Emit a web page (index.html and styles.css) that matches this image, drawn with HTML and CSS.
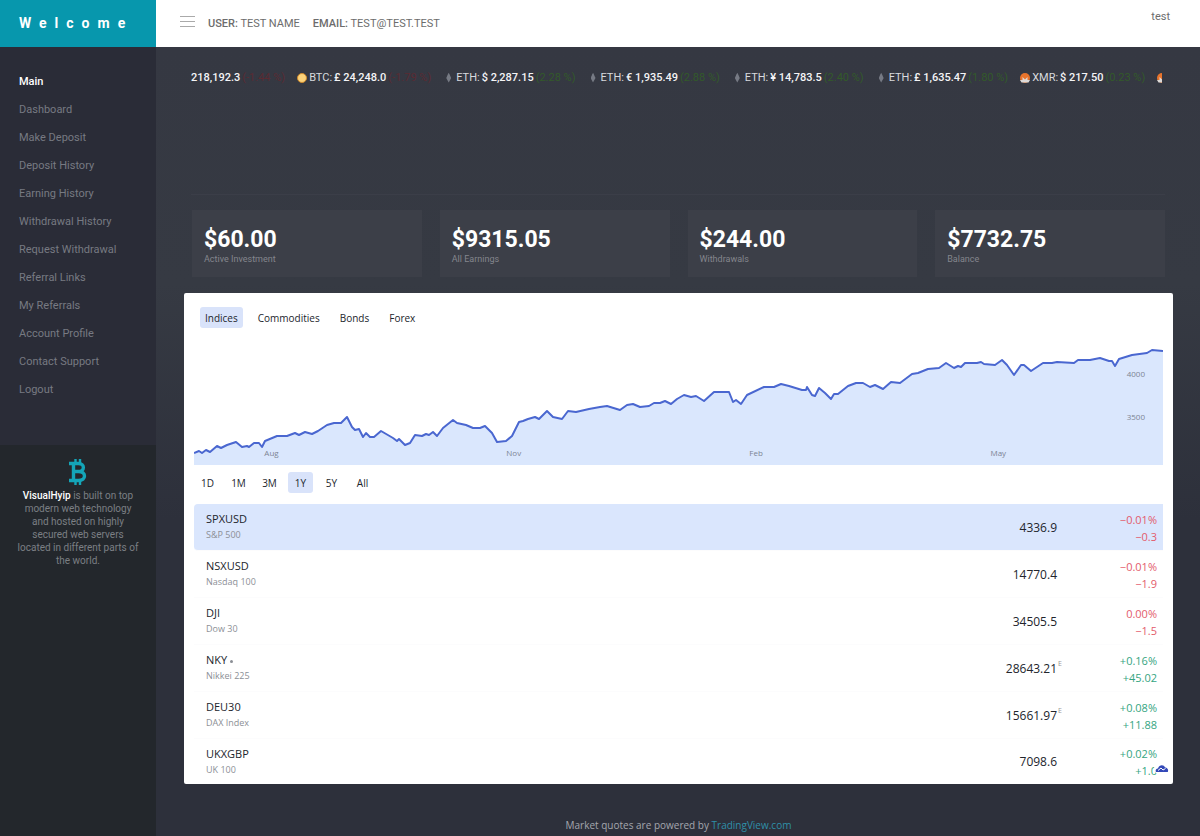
FILE: index.html
```html
<!DOCTYPE html>
<html lang="en">
<head>
<meta charset="utf-8">
<meta name="viewport" content="width=device-width, initial-scale=1">
<title>Dashboard</title>
<link rel="stylesheet" href="styles.css">
</head>
<body>
<div class="app">
  <aside class="sidebar">
    <div class="brand">Welcome</div>
    <nav class="nav" aria-label="Main">
      <h2 class="nav-title">Main</h2>
      <a href="#">Dashboard</a>
      <a href="#">Make Deposit</a>
      <a href="#">Deposit History</a>
      <a href="#">Earning History</a>
      <a href="#">Withdrawal History</a>
      <a href="#">Request Withdrawal</a>
      <a href="#">Referral Links</a>
      <a href="#">My Referrals</a>
      <a href="#">Account Profile</a>
      <a href="#">Contact Support</a>
      <a href="#">Logout</a>
    </nav>
    <div class="about">
      <svg class="about-icon" viewBox="0 0 20 26" aria-hidden="true">
        <g fill="none" stroke="currentColor" stroke-width="3.400">
          <path d="M1 4.500H10.500C17 4.500 17 12.500 10.500 12.500H5.500M10.500 12.500C18.500 12.500 18.500 21.500 10.500 21.500H1M5.500 4.500V21.500"/>
          <path d="M7.500 0V4M12 0V4M7.500 22V26M12 22V26" stroke-width="2.400"/>
        </g>
      </svg>
      <p><strong>VisualHyip</strong> is built on top modern web technology and hosted on highly secured web servers located in different parts of the world.</p>
    </div>
  </aside>

  <div class="page">
    <header class="topbar">
      <button class="menu" type="button" aria-label="Toggle menu"><span></span><span></span><span></span></button>
      <span class="who"><b>USER:</b> TEST NAME</span>
      <span class="who"><b>EMAIL:</b> TEST@TEST.TEST</span>
      <a class="account" href="#">test</a>
    </header>

    <main class="content">
      <div class="ticker">
        <div class="tick"><strong>218,192.3</strong><span class="down">(-1.44 %)</span></div>
        <div class="tick"><i class="coin btc"></i>BTC: <strong>£ 24,248.0</strong><span class="down">(-1.79 %)</span></div>
        <div class="tick"><i class="coin eth"></i>ETH: <strong>$ 2,287.15</strong><span class="up">(2.28 %)</span></div>
        <div class="tick"><i class="coin eth"></i>ETH: <strong>€ 1,935.49</strong><span class="up">(2.88 %)</span></div>
        <div class="tick"><i class="coin eth"></i>ETH: <strong>¥ 14,783.5</strong><span class="up">(2.40 %)</span></div>
        <div class="tick"><i class="coin eth"></i>ETH: <strong>£ 1,635.47</strong><span class="up">(1.80 %)</span></div>
        <div class="tick"><svg class="xmr" viewBox="0 0 10 10" aria-hidden="true"><circle cx="5" cy="5" r="5" fill="#e8742c"/><path d="M0 7H2.500V4L5 6.500L7.500 4V7H10L8.500 9.500H1.500Z" fill="#dcd9d8"/></svg>XMR: <strong>$ 217.50</strong><span class="up">(0.23 %)</span></div>
        <div class="tick"><svg class="xmr" viewBox="0 0 10 10" aria-hidden="true"><circle cx="5" cy="5" r="5" fill="#e8742c"/><path d="M0 7H2.500V4L5 6.500L7.500 4V7H10L8.500 9.500H1.500Z" fill="#dcd9d8"/></svg></div>
      </div>

      <section class="stats">
        <div class="stat"><strong>$60.00</strong><span>Active Investment</span></div>
        <div class="stat"><strong>$9315.05</strong><span>All Earnings</span></div>
        <div class="stat"><strong>$244.00</strong><span>Withdrawals</span></div>
        <div class="stat"><strong>$7732.75</strong><span>Balance</span></div>
      </section>

      <section class="market">
        <div class="tabs">
          <button class="active" type="button">Indices</button>
          <button type="button">Commodities</button>
          <button type="button">Bonds</button>
          <button type="button">Forex</button>
        </div>
        <div class="chart">
          <svg viewBox="194 340 969 125" preserveAspectRatio="none" role="img" aria-label="SPXUSD, one year">
            <path class="area" d="M194 465V453L199 451L202 453L206 450L210 452L217 446L221 448L227 445L236 442L242 447L247 446L249 447L254 443L259 443L262 447L265 441L277 436L287 436L295 433L299 435L305 432L312 434L318 431L327 425L334 423L341 423L347 417L352 427L355 430L359 429L363 437L366 433L370 437L374 437L381 431L393 438L397 441L399 439L405 445L410 443L415 435L422 436L426 434L429 435L433 432L437 436L443 428L448 424L453 420L457 423L466 425L473 428L480 428L485 426L492 433L497 442L506 441L512 436L519 422L523 421L528 419L535 417L539 419L547 411L553 417L562 419L568 411L576 412L589 409L600 407L607 406L620 410L627 405L633 404L640 407L649 406L654 403L660 403L665 401L671 404L677 399L684 395L691 397L696 396L704 401L714 392L729 392L733 402L736 400L741 404L747 395L764 387L774 387L781 384L789 386L802 390L806 390L807 387L812 395L815 396L819 388L825 393L831 399L834 394L838 394L848 386L856 383L863 383L870 387L875 385L883 389L891 382L900 383L912 374L918 373L928 369L939 368L946 363L954 368L958 366L961 367L965 363L977 363L981 362L984 364L995 365L1002 360L1007 365L1014 375L1021 365L1024 365L1031 371L1043 363L1052 363L1057 362L1074 363L1078 360L1090 360L1100 358L1109 361L1112 361L1115 366L1119 359L1132 355L1147 353L1152 350L1163 351V465Z"/>
            <path class="line" d="M194 453L199 451L202 453L206 450L210 452L217 446L221 448L227 445L236 442L242 447L247 446L249 447L254 443L259 443L262 447L265 441L277 436L287 436L295 433L299 435L305 432L312 434L318 431L327 425L334 423L341 423L347 417L352 427L355 430L359 429L363 437L366 433L370 437L374 437L381 431L393 438L397 441L399 439L405 445L410 443L415 435L422 436L426 434L429 435L433 432L437 436L443 428L448 424L453 420L457 423L466 425L473 428L480 428L485 426L492 433L497 442L506 441L512 436L519 422L523 421L528 419L535 417L539 419L547 411L553 417L562 419L568 411L576 412L589 409L600 407L607 406L620 410L627 405L633 404L640 407L649 406L654 403L660 403L665 401L671 404L677 399L684 395L691 397L696 396L704 401L714 392L729 392L733 402L736 400L741 404L747 395L764 387L774 387L781 384L789 386L802 390L806 390L807 387L812 395L815 396L819 388L825 393L831 399L834 394L838 394L848 386L856 383L863 383L870 387L875 385L883 389L891 382L900 383L912 374L918 373L928 369L939 368L946 363L954 368L958 366L961 367L965 363L977 363L981 362L984 364L995 365L1002 360L1007 365L1014 375L1021 365L1024 365L1031 371L1043 363L1052 363L1057 362L1074 363L1078 360L1090 360L1100 358L1109 361L1112 361L1115 366L1119 359L1132 355L1147 353L1152 350L1163 351"/>
          </svg>
          <span class="month aug">Aug</span>
          <span class="month nov">Nov</span>
          <span class="month feb">Feb</span>
          <span class="month may">May</span>
          <span class="level high">4000</span>
          <span class="level low">3500</span>
        </div>
        <div class="ranges">
          <button type="button">1D</button>
          <button type="button">1M</button>
          <button type="button">3M</button>
          <button class="active" type="button">1Y</button>
          <button type="button">5Y</button>
          <button type="button">All</button>
        </div>
        <table class="quotes">
          <tbody>
            <tr class="selected"><th scope="row">SPXUSD<small>S&amp;P 500</small></th><td class="price">4336.9</td><td class="change neg">−0.01%<br>−0.3</td></tr>
            <tr><th scope="row">NSXUSD<small>Nasdaq 100</small></th><td class="price">14770.4</td><td class="change neg">−0.01%<br>−1.9</td></tr>
            <tr><th scope="row">DJI<small>Dow 30</small></th><td class="price">34505.5</td><td class="change neg">0.00%<br>−1.5</td></tr>
            <tr><th scope="row">NKY <i class="dot"></i><small>Nikkei 225</small></th><td class="price"><span class="num">28643.21<sup>E</sup></span></td><td class="change pos">+0.16%<br>+45.02</td></tr>
            <tr><th scope="row">DEU30<small>DAX Index</small></th><td class="price"><span class="num">15661.97<sup>E</sup></span></td><td class="change pos">+0.08%<br>+11.88</td></tr>
            <tr><th scope="row">UKXGBP<small>UK 100</small></th><td class="price">7098.6</td><td class="change pos">+0.02%<br>+1.0</td></tr>
          </tbody>
        </table>
        <a class="badge" href="#" aria-label="TradingView">
          <svg viewBox="0 0 14 9" aria-hidden="true"><path d="M1 8C0 6 1.500 4.500 3 4.500C4 .500 9 .200 10 3.500C12.500 3.500 13.800 6 12.800 8Z" fill="#3348b8"/><path d="M3 6.500L6 4L8 6L10.500 4.500" fill="none" stroke="#fff"/></svg>
        </a>
      </section>

      <footer class="credit">Market quotes are powered by <a href="#">TradingView.com</a></footer>
    </main>
  </div>
</div>
</body>
</html>
```
FILE: styles.css
```css
* {
  box-sizing: border-box;
}

body {
  margin: 0;
  background: #2d303b;
  color: #fff;
  font-family: Roboto, "Liberation Sans", sans-serif;
  font-size: 11px;
}

a {
  color: inherit;
  text-decoration: none;
}

button {
  padding: 0;
  border: 0;
  background: none;
  color: inherit;
  font: inherit;
  cursor: pointer;
}

.app {
  display: flex;
  min-height: 100vh;
}

/* Sidebar */
.sidebar {
  display: flex;
  flex-direction: column;
  flex: 0 0 156px;
  background: #23272c;
}

.brand {
  height: 47px;
  padding-left: 19px;
  background: #0797ad;
  font-size: 14px;
  font-weight: 700;
  line-height: 46px;
  letter-spacing: 8px;
}

.nav {
  display: flex;
  flex-direction: column;
  padding: 21px 0 41px 19px;
  background: #2a2c37;
  color: #777a82;
  line-height: 28px;
}

.nav-title {
  margin: 0;
  color: #fff;
  font-size: 11px;
  font-weight: 500;
}

.about {
  padding: 14px 16px;
  color: #7b7f84;
  font-size: 10px;
  line-height: 13px;
  text-align: center;
}

.about-icon {
  display: block;
  width: 20px;
  height: 26px;
  margin: 0 auto 4px;
  color: #14a5b8;
}

.about p {
  margin: 0;
}

.about strong {
  color: #fff;
  font-weight: 500;
}

/* Header */
.page {
  display: flex;
  flex: 1;
  flex-direction: column;
  min-width: 0;
}

.topbar {
  display: flex;
  align-items: center;
  gap: 13px;
  height: 47px;
  padding: 0 30px 0 24px;
  background: #fff;
  color: #6c6c6c;
}

.menu {
  display: flex;
  flex-direction: column;
  gap: 4px;
  width: 15px;
  margin-top: -4px;
}

.menu span {
  height: 1px;
  background: #aaa;
}

.who b {
  font-weight: 500;
}

.account {
  align-self: flex-start;
  margin: 10px 0 0 auto;
}

/* Content */
.content {
  flex: 1;
  padding: 0 27px 0 28px;
  background: linear-gradient(#353842, #363a43 30%, #2d303b 60%);
}

.ticker {
  display: flex;
  align-items: center;
  height: 148px;
  margin: 0 8px 0 7px;
  padding-bottom: 86px;
  border-bottom: 1px solid #3b3e48;
  overflow: hidden;
  white-space: nowrap;
}

.tick {
  display: flex;
  flex: none;
  align-items: center;
  gap: 2px;
  padding-right: 12px;
  color: #d8dade;
}

.tick:last-child {
  width: 5px;
  padding: 0;
  overflow: hidden;
}

.tick strong {
  color: #f4f4f6;
  font-weight: 500;
}

.down {
  color: #5a2b33;
}

.up {
  color: #335a2a;
}

.coin {
  width: 10px;
  height: 10px;
  border-radius: 50%;
}

.btc {
  border: 1px solid #d08a2c;
  background: #fbd27a;
}

.eth {
  width: 5px;
  margin: 0 3px;
  background: #767a84;
  clip-path: polygon(50% 0, 100% 55%, 50% 100%, 0 55%);
}

.xmr {
  flex: none;
  width: 10px;
  height: 10px;
}

.stats {
  display: grid;
  grid-template-columns: repeat(4, 1fr);
  gap: 18px;
  padding: 15px 8px 16px;
}

.stat {
  display: flex;
  flex-direction: column;
  padding: 17px 12px 12px;
  background: #3c3f48;
}

.stat strong {
  font-size: 23px;
  line-height: 26px;
}

.stat span {
  color: #84868d;
  font-size: 9px;
  line-height: 12px;
}

/* Market widget */
.market {
  position: relative;
  padding: 14px 10px 0;
  border-radius: 2px;
  background: #fff;
  color: #22252c;
  font-family: "Trebuchet MS", "Open Sans", sans-serif;
  overflow: hidden;
}

.tabs,
.ranges {
  display: flex;
}

.tabs {
  gap: 10px;
  padding-left: 6px;
  font-size: 10px;
}

.tabs button,
.ranges button {
  height: 21px;
  border-radius: 3px;
}

.tabs button {
  padding: 0 5px;
}

.tabs .active,
.ranges .active {
  background: #d9e3fa;
}

.chart {
  position: relative;
  margin-top: 12px;
  color: #7d8594;
  font-size: 8px;
  line-height: 10px;
}

.chart svg {
  display: block;
  width: 100%;
  height: 125px;
}

.area {
  fill: #dae7fd;
}

.line {
  fill: none;
  stroke: #4a67d0;
  stroke-width: 2;
  stroke-linejoin: round;
  vector-effect: non-scaling-stroke;
}

.month,
.level {
  position: absolute;
}

.month {
  bottom: 7px;
  transform: translateX(-50%);
}

.aug { left: 8%; }
.nov { left: 33%; }
.feb { left: 58%; }
.may { left: 83%; }

.level {
  right: 18px;
}

.high { top: 29px; }
.low { top: 72px; }

.ranges {
  gap: 6px;
  padding: 7px 0 0 1px;
  font-size: 10px;
}

.ranges button {
  width: 25px;
}

.quotes {
  width: 100%;
  margin-top: 11px;
  border-collapse: separate;
  border-spacing: 0;
  font-size: 12px;
}

.quotes th,
.quotes td {
  height: 47px;
  padding: 0;
  border-bottom: 1px solid #fcfcfd;
  vertical-align: middle;
}

.quotes tr:last-child > * {
  height: 45px;
  border: 0;
}

.quotes th {
  padding-left: 12px;
  font-size: 11px;
  font-weight: 400;
  line-height: 16px;
  text-align: left;
}

.quotes small {
  display: block;
  color: #8c8f96;
  font-size: 9px;
}

.selected th,
.selected td {
  background: #dae6fd;
}

.selected th {
  border-radius: 4px 0 0 4px;
}

.quotes .price {
  text-align: right;
}

.num {
  position: relative;
}

.num sup {
  position: absolute;
  top: 0;
  left: 100%;
  margin-left: 1px;
  color: #999;
  font-size: 7px;
  line-height: 8px;
}

.quotes .change {
  width: 106px;
  padding: 1px 6px 0 0;
  font-size: 11px;
  line-height: 17px;
  text-align: right;
}

.neg { color: #e35b6b; }
.pos { color: #35a57f; }

.dot {
  display: inline-block;
  width: 3px;
  height: 3px;
  border-radius: 50%;
  background: #8b8e95;
  vertical-align: middle;
}

.badge {
  position: absolute;
  right: 3px;
  bottom: 10px;
  padding: 1px;
  border-radius: 6px;
  background: #fff;
}

.badge svg {
  display: block;
  width: 14px;
  height: 9px;
}

.credit {
  padding: 34px 0 4px;
  color: #a4a7ae;
  font-family: "Trebuchet MS", "Open Sans", sans-serif;
  font-size: 10px;
  line-height: 14px;
  text-align: center;
}

.credit a {
  color: #2f8fa8;
}
```
